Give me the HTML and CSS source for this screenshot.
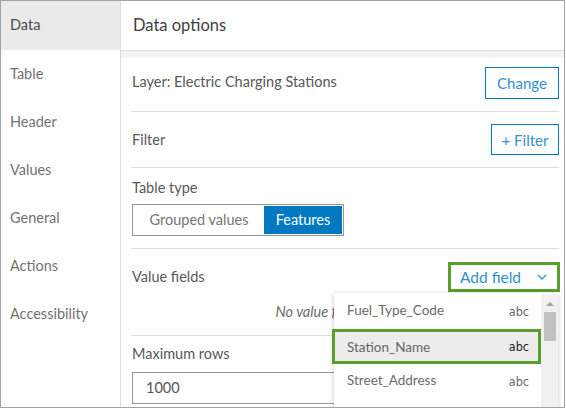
FILE: index.html
```html
<!DOCTYPE html>
<html>
<head>
<meta charset="utf-8">
<link rel="stylesheet" href="styles.css">
</head>
<body>
<div class="frame">
  <nav class="sidebar">
    <div class="nav-item active">Data</div>
    <div class="nav-item">Table</div>
    <div class="nav-item">Header</div>
    <div class="nav-item">Values</div>
    <div class="nav-item">General</div>
    <div class="nav-item">Actions</div>
    <div class="nav-item">Accessibility</div>
  </nav>
  <main class="panel">
    <header class="panel-header">Data options</header>
    <div class="band"></div>
    <div class="content">
      <section class="row layer-row">
        <span class="label">Layer: Electric Charging Stations</span>
        <button class="btn change">Change</button>
      </section>
      <section class="row filter-row">
        <span class="label">Filter</span>
        <button class="btn filter">+ Filter</button>
      </section>
      <section class="block type-block">
        <div class="label">Table type</div>
        <div class="segmented">
          <span class="seg">Grouped values</span>
          <span class="seg on">Features</span>
        </div>
      </section>
      <section class="block fields-block">
        <div class="fields-head">
          <span class="label">Value fields</span>
          <button class="add-field">Add field
            <svg class="chev" width="10" height="6" viewBox="0 0 10 6"><path d="M1 1l4 4 4-4" fill="none" stroke="#2d8fd0" stroke-width="1.3"/></svg>
          </button>
        </div>
        <div class="empty">No value fields selected</div>
      </section>
      <section class="block rows-block">
        <div class="label">Maximum rows</div>
        <div class="input">1000</div>
      </section>
    </div>
    <div class="dropdown">
      <div class="list">
        <div class="opt"><span>Fuel_Type_Code</span><span class="type">abc</span></div>
        <div class="opt hl"><span>Station_Name</span><span class="type dark">abc</span></div>
        <div class="opt"><span>Street_Address</span><span class="type">abc</span></div>
      </div>
      <div class="scrollbar">
        <div class="arrow"></div>
        <div class="thumb"></div>
      </div>
    </div>
  </main>
</div>
</body>
</html>
```
FILE: styles.css
```css
* { box-sizing: border-box; }
html, body { margin: 0; padding: 0; background: #fff; }
body { font-family: Lato, "Noto Sans", sans-serif; color: #4c4c4c; }

.frame {
  width: 565px;
  height: 408px;
  border: 1px solid #a3a3a3;
  display: flex;
  overflow: hidden;
}

.sidebar {
  width: 120px;
  flex: none;
  border-right: 1px solid #dcdcdc;
}
.nav-item {
  height: 48px;
  line-height: 48px;
  padding-left: 9px;
  font-size: 14.5px;
  color: #727272;
}
.nav-item.active {
  background: #eaeaea;
  height: 49px;
  line-height: 48px;
  color: #4a4a4a;
}

.panel {
  flex: 1;
  position: relative;
  display: flex;
  flex-direction: column;
}
.panel-header {
  height: 50px;
  line-height: 48px;
  padding-left: 12px;
  font-size: 16.5px;
  color: #3f3f3f;
  border-bottom: 1px solid #dedede;
}
.band { height: 7px; background: #f4f4f4; }

.content { padding: 0 5px 0 10px; }

.row {
  display: flex;
  align-items: center;
  justify-content: space-between;
  border-bottom: 1px solid #dedede;
}
.label { font-size: 14.5px; line-height: 20px; color: #585858; }
.layer-row { padding: 9px 0 12px 1px; }
.layer-row .label { margin-top: -3px; }
.filter-row { padding: 12px 0 12px 1px; }

.btn {
  height: 32px;
  border: 1px solid #0079c1;
  background: #fff;
  color: #3590cd;
  font-family: Lato, "Noto Sans", sans-serif;
  font-size: 15px;
  padding: 0;
  white-space: nowrap;
  text-align: center;
}
.btn.change { width: 74px; }
.btn.filter { width: 68px; height: 31px; }

.block { border-bottom: 1px solid #dedede; padding-left: 1px; }
.type-block { padding-top: 10px; padding-bottom: 12px; }
.type-block .label { margin-bottom: 6px; }
.segmented {
  display: flex;
  width: 212px;
  height: 32px;
  border: 1px solid #959595;
  padding: 1px;
}
.seg {
  font-size: 14.5px;
  line-height: 28px;
  color: #767676;
  text-align: center;
}
.seg:first-child { width: 130px; }
.seg.on { width: 78px; background: #0079c1; color: #fff; }

.fields-block { padding-top: 13px; padding-bottom: 13px; }
.fields-head {
  display: flex;
  align-items: center;
  justify-content: space-between;
}
.add-field {
  width: 112px;
  height: 30px;
  margin-right: -1px;
  border: 3px solid #5a9f2b;
  background: #fff;
  color: #2d8fd0;
  font-family: Lato, "Noto Sans", sans-serif;
  font-size: 15.5px;
  padding: 0 0 0 9px;
  display: flex;
  align-items: center;
  white-space: nowrap;
}
.chev { margin-left: 16px; }
.empty {
  margin-top: 10px;
  text-align: center;
  font-style: italic;
  font-size: 14.5px;
  line-height: 20px;
  color: #6b6b6b;
}

.rows-block { border-bottom: none; padding-top: 8px; }
.rows-block .label { margin-bottom: 8px; }
.input {
  height: 32px;
  width: 260px;
  border: 1px solid #959595;
  padding-left: 13px;
  font-size: 14.5px;
  line-height: 30px;
  color: #555;
}

.dropdown {
  position: absolute;
  left: 213px;
  top: 292px;
  width: 224px;
  height: 130px;
  background: #fff;
  box-shadow: 0 1px 5px rgba(0,0,0,0.22);
  display: flex;
  padding-top: 1px;
}
.list { width: 207px; }
.opt {
  height: 35px;
  display: flex;
  align-items: center;
  justify-content: space-between;
  padding: 0 12px 0 13px;
  font-size: 13.5px;
  color: #6a6a6a;
}
.opt:first-child span:first-child { margin-top: -3px; }
.opt:last-child span:first-child { margin-top: -3px; }
.opt.hl {
  margin-left: -2px;
  width: 209px;
  padding-left: 12px;
  background: #ececec;
  border: 3px solid #5a9f2b;
  color: #666;
  padding-right: 9px;
}
.type {
  font-family: "DejaVu Sans Condensed", "DejaVu Sans", sans-serif;
  font-size: 12.5px;
  color: #666;
}
.type.dark { color: #222; }
.scrollbar {
  width: 17px;
  background: #f1f1f1;
  position: relative;
}
.arrow {
  margin: 8px auto 0;
  width: 0; height: 0;
  border-left: 4px solid transparent;
  border-right: 4px solid transparent;
  border-bottom: 4px solid #a3a3a3;
}
.thumb {
  margin: 6px auto 0;
  width: 12px;
  height: 29px;
  background: #c1c1c1;
}
```
